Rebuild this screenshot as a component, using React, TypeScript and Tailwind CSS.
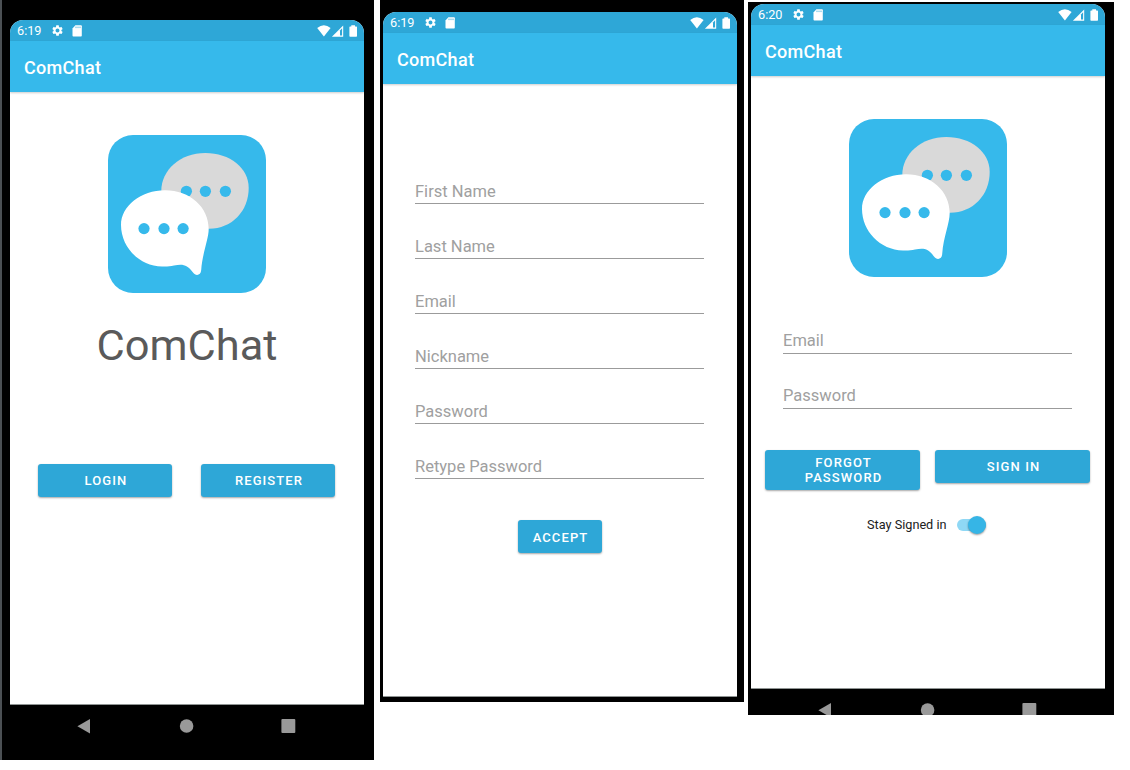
import type { ReactNode } from "react";
import { MdSettings } from "react-icons/md";

function StatusBar({ time }: { time: string }) {
  return (
    <div className="flex h-[21px] items-center bg-[#2ea7d7] pl-[7px] pr-[6px] text-white">
      <span className="w-[34px] text-[12.7px] leading-[21px]">{time}</span>
      <MdSettings size={13} className="shrink-0" />
      <svg width="10" height="12" viewBox="0 0 10 12" className="ml-[8px]">
        <path d="M3.4 .3H9Q9.8 .3 9.8 1.2V10.6Q9.8 11.5 9 11.5H1.4Q.5 11.5 .5 10.6V3.4Z" fill="#fff" />
        <path d="M4 1.6V3.1M6 1.6V3.1M8 1.6V3.1" stroke="#2ea7d7" strokeWidth=".8" />
      </svg>
      <svg width="41" height="12" viewBox="0 0 41 12" className="ml-auto">
        <path d="M.2 2.9Q6.9 -2.2 13.6 2.9L6.9 11.5Z" fill="#fff" />
        <path d="M14.9 11.8 26.2.5V11.8Z" fill="#fff" />
        <path d="M23 5.4 25.1 3.3V10.6H23Z" fill="#2ea7d7" />
        <path d="M34.3 1.4V.3H38V1.4H39.3Q40 1.4 40 2.1V11.1Q40 11.8 39.3 11.8H33.1Q32.4 11.8 32.4 11.1V2.1Q32.4 1.4 33.1 1.4Z" fill="#fff" />
      </svg>
    </div>
  );
}

function Screen({ time, children }: { time: string; children: ReactNode }) {
  return (
    <div className="flex h-[685px] w-[354px] flex-col overflow-hidden rounded-t-[13px] border-b border-[#8f9493] bg-white">
      <StatusBar time={time} />
      <header className="flex h-[51px] shrink-0 items-center bg-[#36b9eb] pl-[14px] pt-px text-[18px] font-medium tracking-[0.3px] text-white shadow-[0_1px_2px_rgba(0,0,0,0.2)]">
        ComChat
      </header>
      <main className="flex flex-1 flex-col items-center">{children}</main>
    </div>
  );
}

function Logo() {
  return (
    <svg width="158" height="158" viewBox="0 0 158 158" className="shrink-0">
      <rect width="158" height="158" rx="25" fill="#36b9eb" />
      <path
        d="M53.3 56C53.3 35 72 18 97.3 18C122 18 140.7 33 140.7 53C140.7 76 124 93.7 101 93.7C76 93.7 53.3 78 53.3 56Z"
        fill="#d9d9d9"
      />
      <g fill="#36b9eb">
        <circle cx="78.4" cy="56.3" r="5.6" />
        <circle cx="97.4" cy="56.3" r="5.6" />
        <circle cx="117.4" cy="56.3" r="5.6" />
      </g>
      <path
        d="M13 90C13 71 33 55.2 57 55.2C82 55.2 100.7 72 100.7 94C100.7 104 94.4 118 93.2 135C92.9 140.5 87.8 141.5 85 137.5C79 129.5 75 129 66 130.5C62 131.2 59 131.8 54 131.5C31 131 13 112 13 90Z"
        fill="#fff"
      />
      <g fill="#36b9eb">
        <circle cx="36" cy="93.6" r="5.6" />
        <circle cx="56" cy="93.6" r="5.6" />
        <circle cx="75.1" cy="93.6" r="5.6" />
      </g>
    </svg>
  );
}

function Button({ children, className }: { children: ReactNode; className: string }) {
  return (
    <button
      className={`flex items-center justify-center rounded-[3px] bg-[#2ea7d7] text-center text-[13px] font-medium leading-[15px] tracking-[1.1px] text-white shadow-[0_1px_2px_rgba(0,0,0,0.35)] ${className}`}
    >
      {children}
    </button>
  );
}

function Field({ label, className = "pb-[2px]" }: { label: string; className?: string }) {
  return (
    <div
      className={`mr-px flex h-[55px] w-[289px] items-end border-b border-[#9b9b9b] text-[16.5px] leading-[20px] text-[#a0a0a0] ${className}`}
    >
      {label}
    </div>
  );
}

function NavIcons() {
  return (
    <svg width="354" height="15" viewBox="0 0 354 15" fill="#999" className="mt-[14px] shrink-0">
      <path d="M67.4 7.2 80 0V14.6Z" />
      <circle cx="176.6" cy="7" r="6.8" />
      <rect x="271.4" y="0" width="13.9" height="13.9" rx="1" />
    </svg>
  );
}

const registerFields = ["First Name", "Last Name", "Email", "Nickname", "Password", "Retype Password"];

export default function App() {
  return (
    <div className="flex h-[770px] w-[1130px] items-start overflow-hidden bg-white font-[Roboto,sans-serif]">
      <section className="h-[760px] w-[374px] border-l-2 border-[#4b5054] bg-black pl-2 pt-5">
        <Screen time="6:19">
          <div className="mt-[43px] flex">
            <Logo />
          </div>
          <h1 className="mt-[28px] text-[43.4px] leading-[50px] text-[#5a5a5a]">ComChat</h1>
          <div className="mr-px mt-[93px] flex gap-[29px]">
            <Button className="h-[33px] w-[134px] pl-[2px]">LOGIN</Button>
            <Button className="h-[33px] w-[134px] pl-[2px]">REGISTER</Button>
          </div>
        </Screen>
        <NavIcons />
      </section>

      <section className="ml-[6px] h-[702px] w-[364px] bg-black pl-[3px] pt-3">
        <Screen time="6:19">
          <div className="mt-[65px]">
            {registerFields.map((label) => (
              <Field key={label} label={label} className="pb-px" />
            ))}
          </div>
          <Button className="mr-px mt-[41px] h-[33px] w-[84px] pl-[2px] pt-[2px]">ACCEPT</Button>
        </Screen>
      </section>

      <section className="ml-1 mt-[2px] h-[713px] w-[366px] overflow-hidden bg-black pl-[3px] pt-[2px]">
        <Screen time="6:20">
          <div className="mt-[43px] flex">
            <Logo />
          </div>
          <div className="mt-[22px]">
            <Field label="Email" />
            <Field label="Password" />
          </div>
          <div className="mr-px mt-[41px] flex items-start gap-[15px]">
            <Button className="h-[40px] w-[155px] pl-[26px] pr-6">FORGOT PASSWORD</Button>
            <Button className="h-[33px] w-[155px] pl-[2px]">SIGN IN</Button>
          </div>
          <div className="mt-[24px] flex w-full items-center pl-[116px]">
            <span className="w-[90px] whitespace-nowrap pt-px text-[12.7px] leading-[20px] text-[#202020]">
              Stay Signed in
            </span>
            <div className="flex h-[12px] w-[29px] items-center justify-end rounded-full bg-[#8fd8f5]">
              <div className="size-[18px] shrink-0 rounded-full bg-[#36b5e6] shadow-[0_1px_2px_rgba(0,0,0,0.4)]" />
            </div>
          </div>
        </Screen>
        <NavIcons />
      </section>
    </div>
  );
}
